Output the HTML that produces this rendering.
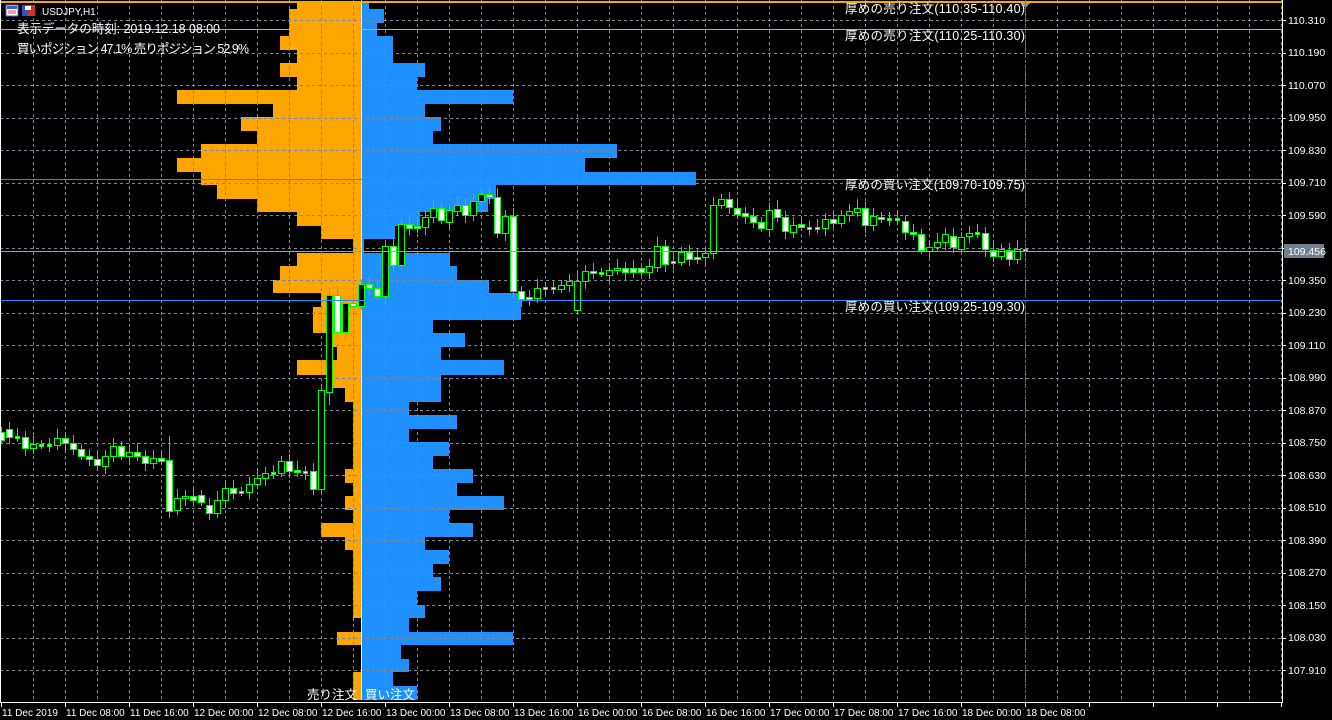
<!DOCTYPE html>
<html><head><meta charset="utf-8">
<style>
html,body{margin:0;padding:0;background:#000;overflow:hidden}
svg{display:block}
text{font-family:"Liberation Sans","Noto Sans CJK JP",sans-serif;fill:#fff}
</style></head><body>
<svg id="s" width="1332" height="720" xmlns="http://www.w3.org/2000/svg" shape-rendering="crispEdges">
<rect width="1332" height="720" fill="#000"/>
<g id="hist"></g>
<g id="grid" stroke="#7a8796" stroke-width="1" stroke-dasharray="3,3"></g>
<rect x="361" y="0" width="1" height="700" fill="#ffe8c0"/>
<g id="candles"></g>
<rect x="0" y="1" width="1282" height="2" fill="#ffa500"/>
<rect x="0" y="29" width="1282" height="1" fill="#ffa500"/>
<rect x="0" y="179" width="1282" height="1" fill="#1e90ff"/>
<rect x="0" y="300" width="1282" height="1" fill="#1e90ff"/>
<rect x="0" y="251" width="1282" height="1" fill="#a0a0a0"/>
<line x1="1025.5" y1="0" x2="1025.5" y2="702" stroke="#ff2020" stroke-dasharray="3,2"/>
<polygon points="1021,3 1030,3 1025.5,8" fill="#8090a0"/>
<rect x="1282" y="0" width="1" height="703" fill="#fff"/>
<rect x="0" y="702" width="1283" height="1" fill="#fff"/>
<rect x="0" y="0" width="1" height="703" fill="#fff"/>
<g id="axis" stroke="#fff"></g>
<rect x="1284" y="244" width="40" height="14" fill="#708090"/>
<g font-size="10.5">
<text x="1288" y="24">110.310</text><text x="1288" y="56">110.190</text><text x="1288" y="89">110.070</text>
<text x="1288" y="121">109.950</text><text x="1288" y="154">109.830</text><text x="1288" y="186">109.710</text>
<text x="1288" y="219">109.590</text><text x="1288" y="255">109.456</text><text x="1288" y="284">109.350</text>
<text x="1288" y="316">109.230</text><text x="1288" y="349">109.110</text><text x="1288" y="381">108.990</text>
<text x="1288" y="414">108.870</text><text x="1288" y="446">108.750</text><text x="1288" y="479">108.630</text>
<text x="1288" y="511">108.510</text><text x="1288" y="544">108.390</text><text x="1288" y="576">108.270</text>
<text x="1288" y="609">108.150</text><text x="1288" y="641">108.030</text><text x="1288" y="674">107.910</text>
</g>
<g font-size="10">
<text x="2" y="716">11 Dec 2019</text><text x="66" y="716">11 Dec 08:00</text><text x="130" y="716">11 Dec 16:00</text>
<text x="194" y="716">12 Dec 00:00</text><text x="258" y="716">12 Dec 08:00</text><text x="322" y="716">12 Dec 16:00</text>
<text x="386" y="716">13 Dec 00:00</text><text x="450" y="716">13 Dec 08:00</text><text x="514" y="716">13 Dec 16:00</text>
<text x="578" y="716">16 Dec 00:00</text><text x="642" y="716">16 Dec 08:00</text><text x="706" y="716">16 Dec 16:00</text>
<text x="770" y="716">17 Dec 00:00</text><text x="834" y="716">17 Dec 08:00</text><text x="898" y="716">17 Dec 16:00</text>
<text x="962" y="716">18 Dec 00:00</text><text x="1026" y="716">18 Dec 08:00</text>
</g>
<g font-size="12.5">
<text x="845" y="13" textLength="180">厚めの売り注文(110.35-110.40)</text>
<text x="845" y="40" textLength="180">厚めの売り注文(110.25-110.30)</text>
<text x="845" y="189" textLength="180">厚めの買い注文(109.70-109.75)</text>
<text x="845" y="311" textLength="180">厚めの買い注文(109.25-109.30)</text>
<text x="17" y="33" textLength="203">表示データの時刻: 2019.12.18 08:00</text>
<text x="17" y="53" textLength="232">買いポジション 47.1% 売りポジション 52.9%</text>
<text x="307" y="699">売り注文</text>
<text x="365" y="699">買い注文</text>
</g>
<text x="42" y="15" font-size="10">USDJPY,H1</text>
<rect x="6" y="5" width="12" height="11" fill="#fff" stroke="#4060c0"/>
<rect x="7" y="6" width="10" height="3" fill="#4060c0"/>
<line x1="8" y1="11" x2="16" y2="11" stroke="#e04040"/><line x1="8" y1="13" x2="16" y2="13" stroke="#e04040"/>
<rect x="22" y="5" width="6" height="11" fill="#3050d0"/><rect x="28" y="5" width="7" height="11" fill="#d03030"/>
<rect x="25" y="6" width="6" height="4" fill="#fff"/>
</svg>
<script>
var NS="http://www.w3.org/2000/svg";
function el(p,t,a){var e=document.createElementNS(NS,t);for(var k in a)e.setAttribute(k,a[k]);p.appendChild(e);return e;}
var g=document.getElementById('grid');
for(var i=0;i<21;i++){var y=Math.round(20+32.5*i)+0.5;el(g,'line',{x1:0,y1:y,x2:1282,y2:y});}
for(var x=33;x<1282;x+=32){el(g,'line',{x1:x+0.5,y1:0,x2:x+0.5,y2:702});}
var ax=document.getElementById('axis');
for(var i=0;i<21;i++){var y=Math.round(20+32.5*i)+0.5;el(ax,'line',{x1:1282,y1:y,x2:1286,y2:y});}
for(var x=1;x<1282;x+=64){el(ax,'line',{x1:x+0.5,y1:702,x2:x+0.5,y2:707});}
var H=[[3,9,297,369],[9,23,289,384],[23,36,289,377],[36,50,280,393],[50,63,297,393],[63,77,280,425],[77,90,297,417],[90,104,177,513],[104,117,273,425],[117,131,241,441],[131,144,257,433],[144,158,201,617],[158,172,177,585],[172,185,201,696],[185,199,217,496],[199,212,257,488],[212,226,297,420],[226,239,321,395],[239,253,353,364],[253,266,297,450],[266,280,280,457],[280,293,273,489],[293,307,321,522],[307,320,313,521],[320,333,313,433],[333,347,330,465],[347,360,337,441],[360,375,297,504],[375,388,332,441],[388,402,345,441],[402,415,353,409],[415,429,353,457],[429,442,353,409],[442,456,353,449],[456,469,353,433],[469,483,345,473],[483,496,353,457],[496,510,345,504],[510,523,353,449],[523,537,321,473],[537,550,345,425],[550,564,353,449],[564,577,353,433],[577,591,353,441],[591,605,353,417],[605,618,353,425],[618,632,361,409],[632,645,337,513],[645,659,361,401],[659,672,361,409],[672,686,353,393],[686,700,353,417]];
var hg=document.getElementById('hist');
H.forEach(function(r){
 if(r[2]<361)el(hg,'rect',{x:r[2],y:r[0],width:361-r[2],height:r[1]-r[0],fill:'#ffa500'});
 el(hg,'rect',{x:362,y:r[0],width:r[3]-362,height:r[1]-r[0],fill:'#1e90ff'});
});
var C=[[432,440],[429,437],[437,437],[437,448],[448,444],[445,445],[445,445],[445,438],[438,443],[443,449],[449,456],[456,459],[459,465],[466,456],[456,446],[446,456],[456,452],[452,456],[456,463],[463,458],[458,461],[460,511],[510,498],[498,496],[496,500],[495,502],[505,513],[513,500],[500,488],[488,493],[492,492],[492,484],[484,478],[478,473],[473,473],[473,461],[461,471],[470,472],[472,472],[471,489],[489,390],[392,295],[295,332],[332,303],[303,306],[306,284],[284,288],[288,296],[296,246],[246,265],[265,224],[224,228],[226,228],[227,217],[217,208],[208,220],[222,210],[211,205],[205,215],[215,201],[201,194],[194,197],[197,233],[233,216],[216,291],[291,299],[297,299],[298,288],[288,288],[288,288],[289,285],[285,281],[310,281],[281,271],[271,273],[273,273],[275,270],[270,268],[268,272],[268,272],[268,272],[272,266],[267,246],[246,264],[262,263],[262,252],[252,259],[257,259],[257,253],[253,205],[205,199],[199,207],[208,214],[213,216],[216,222],[222,228],[229,210],[209,217],[217,231],[232,225],[224,227],[228,228],[228,228],[228,219],[219,223],[223,215],[215,211],[212,208],[208,225],[225,216],[217,219],[219,219],[219,219],[221,232],[232,234],[234,250],[251,247],[247,242],[242,234],[236,247],[249,237],[236,233],[233,233],[233,249],[250,256],[256,249],[250,259],[259,249],[250,250]];
var cg=document.getElementById('candles');
C.forEach(function(c,i){
 var x=1+8*i,t=Math.min(c[0],c[1]),b=Math.max(c[0],c[1]);
 var wt=t-5-(i*7%5),wb=b+4+(i*3%5);
 if(i==21)wt=436; if(i==41)wb=405; if(i==40)wt=384;
 el(cg,'line',{x1:x+0.5,y1:wt,x2:x+0.5,y2:wb,stroke:'#00ff00'});
 if(b-t<2){el(cg,'rect',{x:x-2,y:t-1,width:5,height:3,fill:'#00ff00'});el(cg,'rect',{x:x-1,y:t,width:3,height:1,fill:c[0]>c[1]?'#000':'#fff'});}
 else el(cg,'rect',{x:x-2.5,y:t+0.5,width:6,height:b-t,fill:c[0]>c[1]?'#000':'#fff',stroke:'#00ff00'});
});
</script>
</body></html>
